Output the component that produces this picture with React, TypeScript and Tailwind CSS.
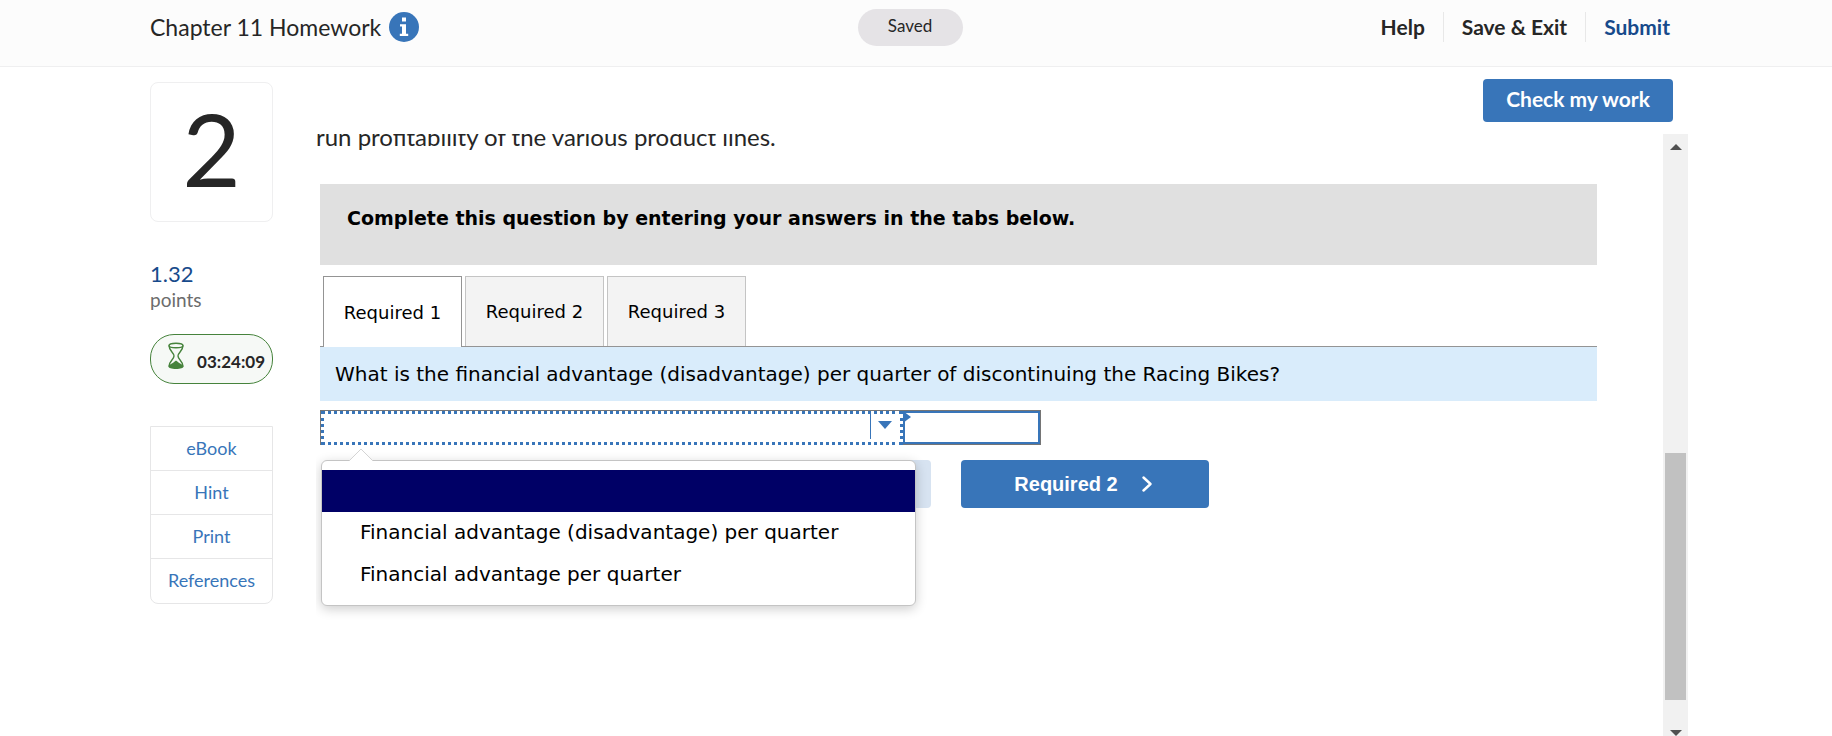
import { useState } from "react";

const VERDANA = "font-['DejaVu_Sans',sans-serif]";

const TABS = ["Required 1", "Required 2", "Required 3"];

const OPTIONS = [
  "",
  "Financial advantage (disadvantage) per quarter",
  "Financial advantage per quarter",
];

const RESOURCES = ["eBook", "Hint", "Print", "References"];

function InfoIcon() {
  return (
    <svg viewBox="0 0 30 30" className="size-[30px]" aria-hidden="true">
      <circle cx="15" cy="15" r="15" fill="#3875b9" />
      <path fill="#fff" d="M13 5.5h4v4h-4zM11 12.2h6v9.6h2.2V24h-8.4v-2.2H13v-7.4h-2z" />
    </svg>
  );
}

function Hourglass() {
  return (
    <svg viewBox="0 0 18 28" className="h-7 w-[18px]" fill="none" stroke="#46833c" aria-hidden="true">
      <ellipse cx="9" cy="3.5" rx="7" ry="2.3" strokeWidth="1.4" />
      <path d="M2 3.5c0 5.5 5 7 5 10.5s-5 5-5 10.5M16 3.5c0 5.5-5 7-5 10.5s5 5 5 10.5" strokeWidth="1.4" />
      <path d="M1.5 24.500c0-2 3.500-2.500 5.500-4.500l2-1.500 2 1.500c2 2 5.500 2.500 5.500 4.500 0 1.500-3 2.500-7.500 2.500s-7.500-1-7.500-2.500z" fill="#46833c" stroke="none" />
    </svg>
  );
}

function Header() {
  return (
    <header className="grid h-[67px] shrink-0 grid-cols-[1fr_auto_1fr] items-start border-b border-[#efeff0] bg-[#fcfcfc] pr-[162px] pl-[150px]">
      <div className="flex items-center gap-2 pt-3">
        <h1 className="text-[23px] leading-[30px]">Chapter 11 Homework</h1>
        <button type="button" aria-label="Assignment information">
          <InfoIcon />
        </button>
      </div>
      <p className="mt-[9px] h-[37px] w-[105px] rounded-full bg-[#e5e3e6] text-center text-[17px] leading-[34px]">
        Saved
      </p>
      <nav className="flex justify-end pt-3 text-[21px] leading-[30px] font-bold">
        <a href="#help" className="pr-[18px]">Help</a>
        <a href="#exit" className="border-l border-[#e8e8e8] px-[18px]">Save &amp; Exit</a>
        <a href="#submit" className="border-l border-[#e8e8e8] pl-[18px] text-[#174a8b]">Submit</a>
      </nav>
    </header>
  );
}

function Sidebar() {
  return (
    <aside className="w-[123px] shrink-0 pt-[15px]">
      <div className="flex h-[140px] items-center justify-center rounded-lg border border-[#efeff0] pb-2 text-[101px] leading-none">
        2
      </div>
      <p className="mt-[38px] text-[22px] leading-7 text-[#174a8b]">1.32</p>
      <p className="text-[19px] leading-6 text-[#6c6c6c]">points</p>
      <div className="mt-[22px] flex h-[50px] items-center justify-between rounded-[24px] border border-[#46833c] bg-[#f6f9f6] pr-[7px] pl-4">
        <span className="pb-[6px]">
          <Hourglass />
        </span>
        <span className="pt-[6px] text-[17px] leading-6 font-bold">03:24:09</span>
      </div>
      <nav className="mt-[42px] divide-y divide-[#e6e6e7] rounded-b-lg border border-[#e6e6e7] text-center text-[18px] text-[#3875b9]">
        {RESOURCES.map((name) => (
          <a key={name} href={`#${name}`} className="block h-[44px] leading-[43px]">
            {name}
          </a>
        ))}
      </nav>
    </aside>
  );
}

function Scrollbar() {
  return (
    <div className="-mb-[10px] flex w-[25px] shrink-0 flex-col items-center justify-between bg-[#f1f1f1] py-[10px]" aria-hidden="true">
      <svg viewBox="0 0 12 6" className="h-[6px] w-3">
        <path d="M0 6L6 0l6 6z" fill="#505050" />
      </svg>
      <div className="mb-[30px] flex w-[21px] flex-1 flex-col justify-end">
        <div className="h-[45%] bg-[#c1c1c1]" />
      </div>
      <svg viewBox="0 0 12 6" className="h-[6px] w-3">
        <path d="M0 0l6 6 6-6z" fill="#505050" />
      </svg>
    </div>
  );
}

function AnswerRow() {
  const [choice, setChoice] = useState("");
  const [amount, setAmount] = useState("");
  const [open, setOpen] = useState(true);

  function pick(option: string) {
    setChoice(option);
    setOpen(false);
  }

  return (
    <div className="relative mt-[9px] flex h-[35px]">
      <div className="relative w-[583px] border-t border-l border-[#757575]">
        <select
          id="answer"
          value={choice}
          onChange={(e) => setChoice(e.target.value)}
          className="block h-[34px] w-full appearance-none border-[3px] border-dotted border-[#3875b9] px-2 text-[17px] outline-none"
        >
          {OPTIONS.map((o) => (
            <option key={o} value={o}>{o}</option>
          ))}
        </select>
        <span className="pointer-events-none absolute top-0 right-0 flex h-7 w-[33px] justify-center border-l border-[#3875b9] pt-[10px] pr-1">
          <svg viewBox="0 0 14 8" className="h-2 w-[14px]">
            <path d="M0 0h14L7 8z" fill="#3875b9" />
          </svg>
        </span>
      </div>
      <div className="relative border border-l-0 border-[#757575]">
        <input
          type="text"
          aria-label="Amount"
          value={amount}
          onChange={(e) => setAmount(e.target.value)}
          className="block h-[33px] w-[137px] border-2 border-[#3875b9] px-2 text-right text-[17px] outline-none"
        />
        <svg viewBox="0 0 8 12" className="absolute top-0 left-0 h-3 w-2">
          <path d="M0 0l8 6-8 6z" fill="#3875b9" />
        </svg>
      </div>

      {open && (
        <div className="absolute top-[50px] left-px z-10 w-[595px] rounded-md border border-[#c4c4c4] bg-white pt-[9px] pb-[9px] shadow-[0_3px_12px_rgba(0,0,0,0.2)]">
          <svg viewBox="0 0 26 13" className="absolute -top-[13px] left-[26px] h-[13px] w-[26px]">
            <path d="M1 13L13 1l12 12" fill="#fff" stroke="#d4d4d4" />
          </svg>
          <ul role="listbox" aria-labelledby="question" className="text-[20px] leading-[40px]">
            {OPTIONS.map((o) => (
              <li
                key={o}
                role="option"
                aria-selected={o === choice}
                onClick={() => pick(o)}
                className={`h-[42px] cursor-pointer pl-[38px] ${o === choice ? "bg-[#000066] text-white" : ""}`}
              >
                {o}
              </li>
            ))}
          </ul>
        </div>
      )}
    </div>
  );
}

function Question() {
  const [tab, setTab] = useState(TABS[0]);

  return (
    <section className="mr-[66px] ml-1 text-black">
      <div className={`mt-[33px] h-[81px] bg-[#e0e0e0] pt-5 pl-[27px] ${VERDANA}`}>
        <h2 className="text-[19px] leading-7 font-bold">
          Complete this question by entering your answers in the tabs below.
        </h2>
      </div>

      <div role="tablist" className={`mt-[11px] flex gap-[3px] border-b border-[#949494] pl-[3px] text-[18px] ${VERDANA}`}>
        {TABS.map((name) => (
          <button
            key={name}
            type="button"
            role="tab"
            aria-selected={tab === name}
            onClick={() => setTab(name)}
            className={`w-[139px] border border-b-0 ${
              tab === name
                ? "-mb-px h-[71px] border-[#949494] bg-white"
                : "h-[70px] border-[#c4c4c4] bg-[#f3f3f3]"
            }`}
          >
            {name}
          </button>
        ))}
      </div>

      <div className={VERDANA}>
        <label
          id="question"
          htmlFor="answer"
          className="block h-[54px] bg-[#d9ecfb] pl-[15px] text-[20px] leading-[54px]"
        >
          What is the financial advantage (disadvantage) per quarter of discontinuing the Racing Bikes?
        </label>
        <AnswerRow />
      </div>

      <div className="mt-[15px] flex justify-center gap-[30px] pr-[25px] font-['Liberation_Sans',sans-serif] text-[20px] font-bold text-white">
        <button type="button" disabled className="h-12 w-[248px] rounded bg-[#d7e3f1]">
          Required 1
        </button>
        <button type="button" className="flex h-12 w-[248px] items-center justify-center gap-6 rounded bg-[#3875b9] pr-1">
          Required 2
          <svg viewBox="0 0 10 16" className="h-4 w-[10px]" fill="none" stroke="#fff" strokeWidth="2.4" strokeLinecap="round" strokeLinejoin="round">
            <path d="M1.5 1.5L8.5 8l-7 6.5" />
          </svg>
        </button>
      </div>
    </section>
  );
}

export default function App() {
  return (
    <div className="flex h-screen flex-col overflow-hidden bg-white font-[Lato,sans-serif] text-[#262626]">
      <Header />
      <main className="flex min-h-0 flex-1 pr-[144px] pl-[150px]">
        <Sidebar />
        <div className="ml-[43px] flex min-w-0 flex-1 flex-col">
          <div className="flex justify-end pt-3 pr-[15px] pb-3">
            <button type="button" className="h-[43px] w-[190px] rounded bg-[#3875b9] pb-1 text-[21px] leading-[36px] font-bold text-white">
              Check my work
            </button>
          </div>
          <div className="flex min-h-0 flex-1">
            <div className="min-w-0 flex-1 overflow-hidden">
              <p className="-mt-[11px] text-[24px] leading-7">
                run profitability of the various product lines.
              </p>
              <Question />
            </div>
            <Scrollbar />
          </div>
        </div>
      </main>
    </div>
  );
}
